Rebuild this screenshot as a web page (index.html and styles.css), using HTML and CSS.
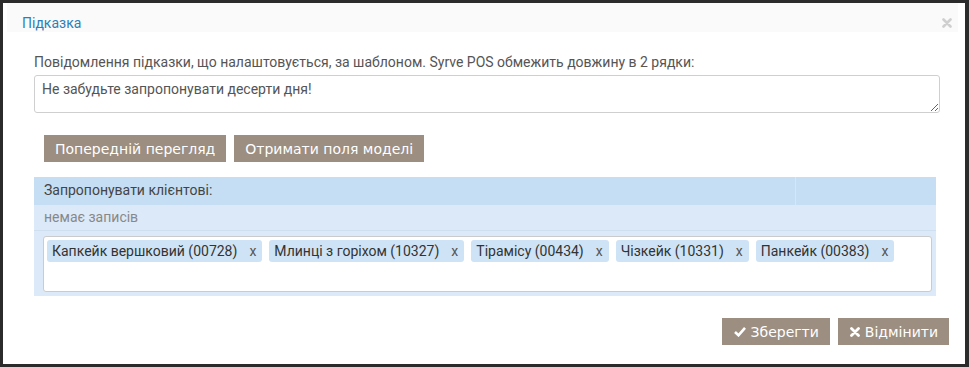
FILE: index.html
```html
<!DOCTYPE html>
<html lang="uk">
<head>
<meta charset="utf-8">
<title>Підказка</title>
<link rel="stylesheet" href="styles.css">
</head>
<body>
<div class="dialog">
  <div class="dialog-header">
    <span class="dialog-title">Підказка</span>
    <svg class="close" width="10" height="10" viewBox="0 0 10 10"><path d="M1.5 1.5 L8.5 8.5 M8.5 1.5 L1.5 8.5" stroke="#cfcfcf" stroke-width="2.6" stroke-linecap="round"/></svg>
  </div>
  <div class="dialog-body">
    <div class="label">Повідомлення підказки, що налаштовується, за шаблоном. Syrve POS обмежить довжину в 2 рядки:</div>
    <textarea class="message">Не забудьте запропонувати десерти дня!</textarea>
    <div class="actions">
      <button class="btn">Попередній перегляд</button>
      <button class="btn">Отримати поля моделі</button>
    </div>
    <div class="panel">
      <div class="panel-head">
        <div class="panel-head-main">Запропонувати клієнтові:</div>
        <div class="panel-head-side"></div>
      </div>
      <div class="panel-empty">немає записів</div>
      <div class="panel-tags">
        <div class="tags">
          <span class="tag">Капкейк вершковий (00728)<span class="tag-x">x</span></span>
          <span class="tag">Млинці з горіхом (10327)<span class="tag-x">x</span></span>
          <span class="tag">Тірамісу (00434)<span class="tag-x">x</span></span>
          <span class="tag">Чізкейк (10331)<span class="tag-x">x</span></span>
          <span class="tag">Панкейк (00383)<span class="tag-x">x</span></span>
        </div>
      </div>
    </div>
  </div>
  <div class="dialog-footer">
    <button class="btn btn-icon"><svg width="12" height="11" viewBox="0 0 12 11"><path d="M1 6 L4.5 9.3 L11 1.8" fill="none" stroke="#fff" stroke-width="2.6" stroke-linejoin="miter"/></svg>Зберегти</button>
    <button class="btn btn-icon"><svg width="10" height="10" viewBox="0 0 10 10"><path d="M1.5 1.5 L8.5 8.5 M8.5 1.5 L1.5 8.5" stroke="#fff" stroke-width="2.8" stroke-linecap="round"/></svg>Відмінити</button>
  </div>
</div>
</body>
</html>
```

FILE: styles.css
```css
html, body {
  margin: 0;
  padding: 0;
  background: #2b2b2b;
}
body {
  padding: 3px 4px 3px 3px;
  font-family: Roboto, "Liberation Sans", Arial, sans-serif;
}
.dialog {
  background: #fff;
  height: 361px;
  box-sizing: border-box;
  display: flex;
  flex-direction: column;
}
.dialog-header {
  background: #fafafa;
  margin: 0 7px 0 4px;
  height: 29px;
  display: flex;
  align-items: flex-start;
  justify-content: space-between;
  padding: 11px 0 0 15px;
  box-sizing: border-box;
}
.dialog-title {
  color: #2f7fb6;
  font-size: 14px;
  line-height: 18px;
}
.close {
  margin: 4px 6px 0 0;
}
.dialog-body {
  padding: 21px 29px 0 31px;
}
.label {
  color: #555;
  font-size: 14px;
  line-height: 18px;
}
.message {
  display: block;
  margin-top: 4px;
  width: 906px;
  height: 38px;
  box-sizing: border-box;
  border: 1px solid #cfcfcf;
  border-radius: 3px;
  padding: 5px 7px;
  font-family: Roboto, "Liberation Sans", Arial, sans-serif;
  font-size: 14px;
  line-height: 17px;
  color: #555;
  resize: vertical;
}
.actions {
  display: flex;
  gap: 8px;
  margin: 22px 0 0 10px;
}
.btn {
  background: #9c8e81;
  color: #fff;
  border: none;
  border-radius: 0;
  height: 27px;
  padding: 0 11px;
  font-family: "DejaVu Sans", Verdana, sans-serif;
  font-size: 14px;
  cursor: pointer;
}
.panel {
  margin-top: 15px;
  width: 902px;
  background: #dce9f8;
  padding-bottom: 4px;
}
.panel-head {
  display: flex;
  background: #c5def4;
  height: 28px;
  font-size: 14px;
  color: #444;
}
.panel-head-main {
  flex: 1;
  padding: 5px 10px;
  border-right: 1px solid #d7e6f5;
}
.panel-head-side {
  width: 140px;
}
.panel-empty {
  height: 26px;
  box-sizing: border-box;
  padding: 4px 10px;
  color: #888;
  font-size: 14px;
  line-height: 17px;
  border-bottom: 1px solid #cfdff0;
}
.panel-tags {
  padding: 5px 4px 0 9px;
}
.tags {
  background: #fff;
  border: 1px solid #cbcbcb;
  border-radius: 3px;
  height: 56px;
  box-sizing: border-box;
  padding: 3px 3px;
  display: flex;
  flex-wrap: wrap;
  align-content: flex-start;
  gap: 7px;
}
.tag {
  background: #cfe3f6;
  border-radius: 3px;
  height: 22px;
  line-height: 22px;
  padding: 0 6px 0 5px;
  color: #333;
  font-size: 14px;
  display: inline-flex;
}
.tag-x {
  margin-left: 12px;
  color: #555;
}
.dialog-footer {
  margin-top: auto;
  display: flex;
  justify-content: flex-end;
  gap: 8px;
  padding: 0 16px 19px 0;
}
.btn-icon {
  display: inline-flex;
  align-items: center;
  gap: 5px;
  padding: 0 11px 0 12px;
}
```
